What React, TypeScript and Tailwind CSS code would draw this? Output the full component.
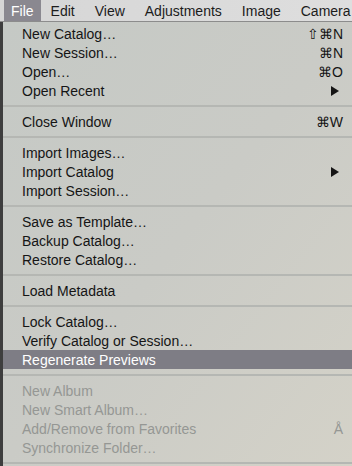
import React from "react";

type Item =
  | { type: "sep" }
  | { type: "item"; label: string; shortcut?: string; arrow?: boolean; disabled?: boolean; active?: boolean };

const items: Item[] = [
  { type: "item", label: "New Catalog…", shortcut: "⇧⌘N" },
  { type: "item", label: "New Session…", shortcut: "⌘N" },
  { type: "item", label: "Open…", shortcut: "⌘O" },
  { type: "item", label: "Open Recent", arrow: true },
  { type: "sep" },
  { type: "item", label: "Close Window", shortcut: "⌘W" },
  { type: "sep" },
  { type: "item", label: "Import Images…" },
  { type: "item", label: "Import Catalog", arrow: true },
  { type: "item", label: "Import Session…" },
  { type: "sep" },
  { type: "item", label: "Save as Template…" },
  { type: "item", label: "Backup Catalog…" },
  { type: "item", label: "Restore Catalog…" },
  { type: "sep" },
  { type: "item", label: "Load Metadata" },
  { type: "sep" },
  { type: "item", label: "Lock Catalog…" },
  { type: "item", label: "Verify Catalog or Session…" },
  { type: "item", label: "Regenerate Previews", active: true },
  { type: "sep" },
  { type: "item", label: "New Album", disabled: true },
  { type: "item", label: "New Smart Album…", disabled: true },
  { type: "item", label: "Add/Remove from Favorites", shortcut: "Å", disabled: true },
  { type: "item", label: "Synchronize Folder…", disabled: true },
  { type: "sep" },
];

export default function App() {
  return (
    <div
      className="w-[352px] h-[466px] overflow-hidden flex flex-col text-[14px] leading-none"
      style={{ fontFamily: '"Liberation Sans", Arial, Helvetica, sans-serif' }}
    >
      <div className="h-[22px] shrink-0 flex items-stretch bg-gradient-to-r from-[#d6d6d6] to-[#dedede] text-[#1c1c1c] pl-[4px] border-b border-[#8c8c8c]">
        <div className="flex items-center px-[7px] bg-[#8a8890] text-white">File</div>
        <div className="flex items-center px-[10px]">Edit</div>
        <div className="flex items-center px-[10px]">View</div>
        <div className="flex items-center px-[10px]">Adjustments</div>
        <div className="flex items-center px-[10px]">Image</div>
        <div className="flex items-center px-[10px] whitespace-nowrap">Camera</div>
      </div>
      <div className="flex flex-1 min-h-0">
        <div className="w-[3px] shrink-0 bg-[#3e3e3e]" />
        <div className="flex-1 bg-gradient-to-br from-[#c5c9c5] via-[#cacbc6] to-[#d4d2c8] pt-[2px]">
          {items.map((it, i) =>
            it.type === "sep" ? (
              <div key={i} className="h-[12px] flex items-center">
                <div className="h-[2px] w-full bg-[#b5b7b3]" />
              </div>
            ) : (
              <div
                key={i}
                className={
                  "h-[19px] flex items-center pl-[19px] pr-[9px] " +
                  (it.active
                    ? "bg-[#7e7d85] text-white"
                    : it.disabled
                    ? "text-[#959794]"
                    : "text-[#151515]")
                }
              >
                <span className="flex-1 whitespace-nowrap">{it.label}</span>
                {it.shortcut && <span className="whitespace-nowrap">{it.shortcut}</span>}
                {it.arrow && (
                  <svg width="8" height="10" viewBox="0 0 8 10" className="mr-[4px]">
                    <path d="M0 0 L8 5 L0 10 Z" fill="#151515" />
                  </svg>
                )}
              </div>
            )
          )}
        </div>
      </div>
    </div>
  );
}
